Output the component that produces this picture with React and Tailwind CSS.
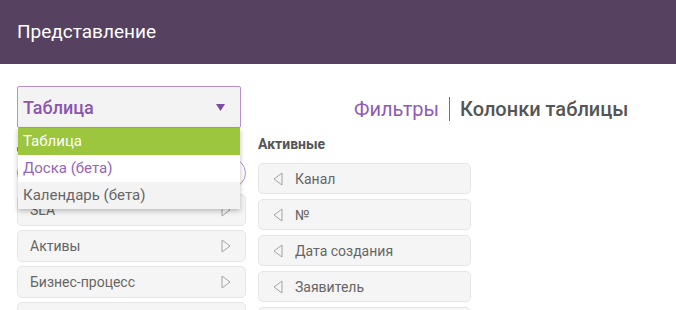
const available = ["SLA", "Активы", "Бизнес-процесс", "Группа"];
const active = ["Канал", "№", "Дата создания", "Заявитель", "Исполнитель"];

const TriRight = () => (
  <svg width="10" height="14" viewBox="0 0 10 14" className="shrink-0">
    <polygon points="1,1 9,7 1,13" fill="none" stroke="#a3a3a3" strokeWidth="1" />
  </svg>
);

const TriLeft = () => (
  <svg width="10" height="14" viewBox="0 0 10 14" className="shrink-0">
    <polygon points="9,1 1,7 9,13" fill="none" stroke="#a3a3a3" strokeWidth="1" />
  </svg>
);

const App = () => {
  return (
    <div className="h-[310px] w-[676px] overflow-hidden bg-white font-['Roboto',sans-serif]">
      <header className="flex h-16 items-center bg-[#564260] px-[17px] text-[19px] text-white">
        Представление
      </header>

      <div className="flex gap-3 px-[17px] pt-[22px]">
        <div className="w-[229px] shrink-0">
          <div className="relative w-[224px]">
            <div className="flex h-[42px] items-center justify-between rounded-[2px] border border-[#b690d2] bg-[#f3f3f3] pl-[5px] pr-[15px]">
              <span className="text-[18px] font-medium text-[#8b55b0]">Таблица</span>
              <svg width="9" height="7" viewBox="0 0 9 7">
                <polygon points="0,0 9,0 4.5,7" fill="#7d4aa6" />
              </svg>
            </div>
            <div className="absolute left-px top-full z-10 w-[222px] bg-white text-[15px] shadow-[0_2px_5px_rgba(0,0,0,0.25)]">
              <div className="flex h-[27px] items-center bg-[#9bc63e] pl-[5px] text-white">Таблица</div>
              <div className="flex h-[27px] items-center bg-white pl-[5px] text-[#9465b8]">Доска (бета)</div>
              <div className="flex h-[27px] items-center bg-[#f3f3f3] pl-[5px] text-[#666]">Календарь (бета)</div>
            </div>
          </div>

          <div className="mt-[6px] text-sm font-bold text-[#555]">Доступные</div>
          <div className="mt-[4px] h-[30px] rounded-full border border-[#b690d2] bg-white"></div>

          <div className="mt-[6px] flex flex-col gap-[4px]">
            {available.map((name) => (
              <div
                key={name}
                className="flex h-[32px] items-center justify-between rounded-[5px] border border-[#e6e6e6] bg-[#f5f5f5] pl-[12px] pr-[14px] text-sm text-[#666]"
              >
                <span>{name}</span>
                <TriRight />
              </div>
            ))}
          </div>
        </div>

        <div className="flex-1">
          <div className="ml-[96px] mt-[11px] flex h-[24px] items-center">
            <span className="text-[20px] text-[#8e5ab5]">Фильтры</span>
            <span className="mx-[10px] h-[24px] w-px bg-[#8e5ab5]"></span>
            <span className="text-[20px] font-medium text-[#555]">Колонки таблицы</span>
          </div>

          <div className="mt-[13px] text-sm font-bold text-[#555]">Активные</div>

          <div className="mt-[9px] flex w-[213px] flex-col gap-[5px]">
            {active.map((name) => (
              <div
                key={name}
                className="flex h-[31px] items-center gap-[12px] rounded-[5px] border border-[#e6e6e6] bg-[#f5f5f5] pl-[14px] text-sm text-[#666]"
              >
                <TriLeft />
                <span>{name}</span>
              </div>
            ))}
          </div>
        </div>
      </div>
    </div>
  );
};

export default App;
